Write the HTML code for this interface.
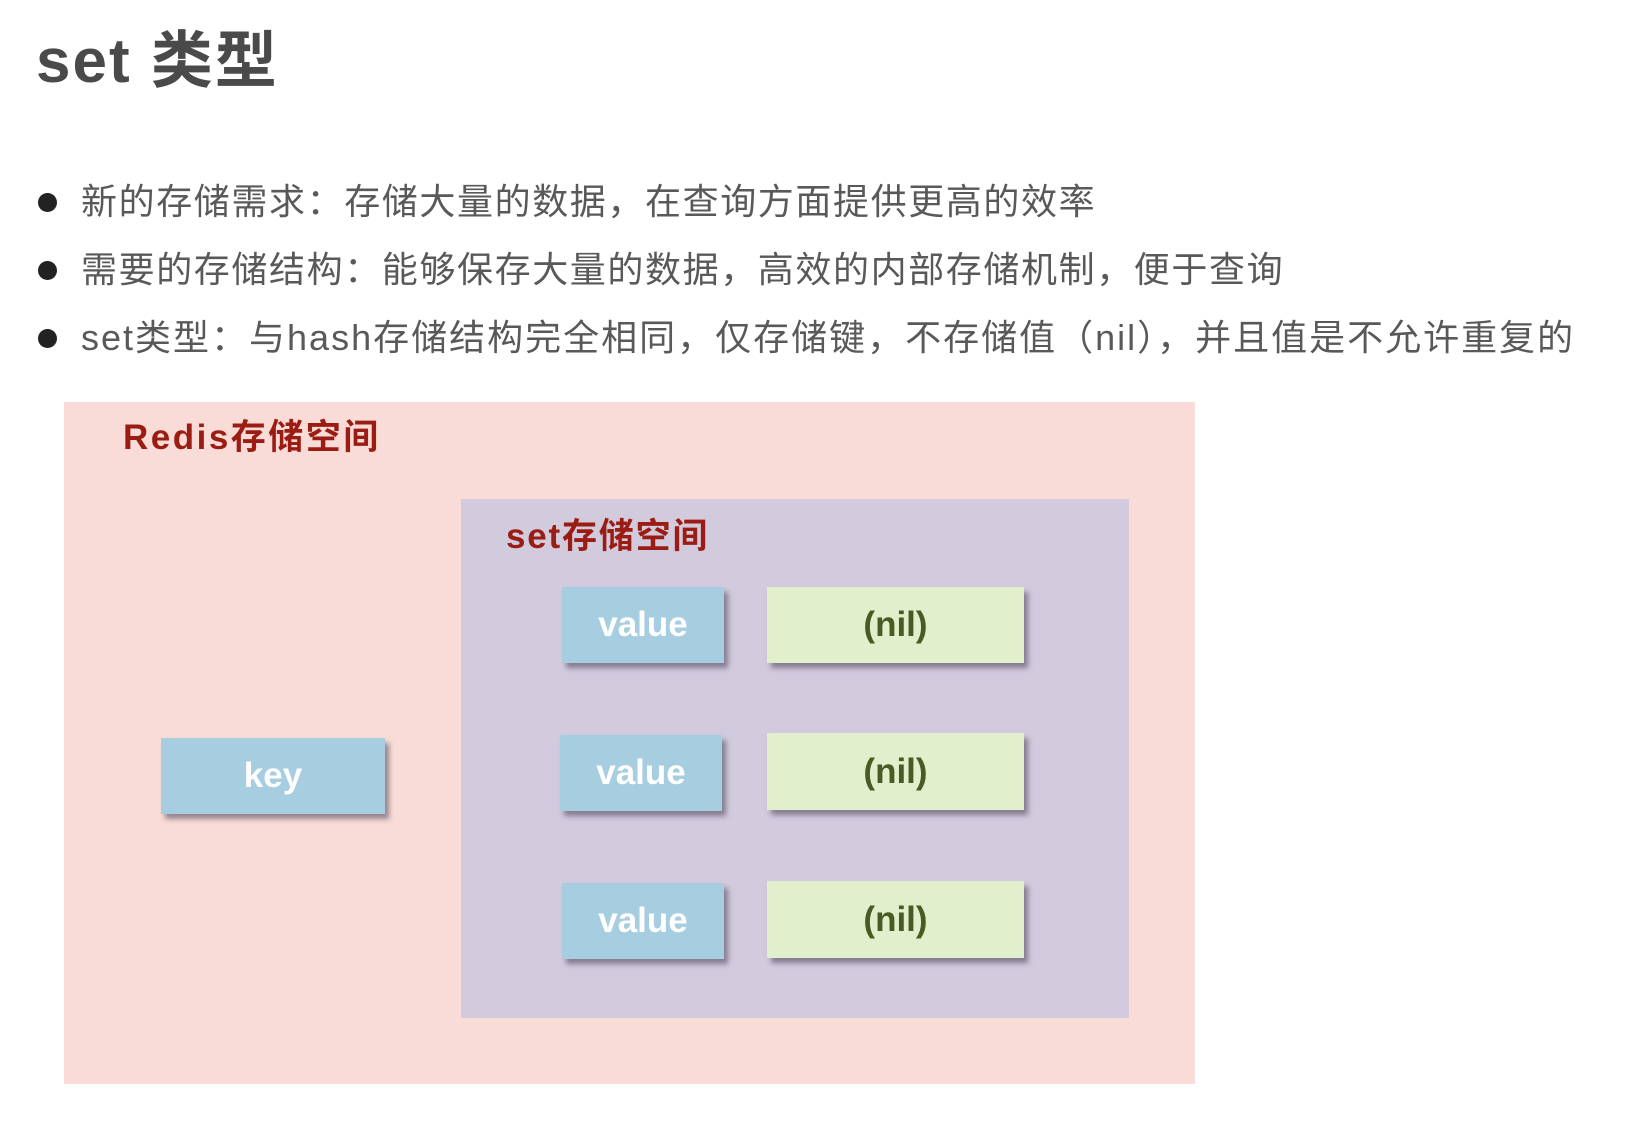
<!DOCTYPE html>
<html><head><meta charset="utf-8"><style>
html,body{margin:0;padding:0;background:#fff;width:1644px;height:1142px;overflow:hidden;position:relative;font-family:"Liberation Sans","Noto Sans CJK SC",sans-serif;}
.a{position:absolute;white-space:nowrap;}
h1{position:absolute;left:36px;top:22px;margin:0;font-size:62px;line-height:80px;font-weight:bold;color:#4a4a4a;letter-spacing:2px;font-family:"Liberation Sans","Noto Sans CJK SC",sans-serif;}
.li{position:absolute;left:81px;font-size:36px;line-height:44px;color:#595959;white-space:nowrap;letter-spacing:1.6px;}
.dot{position:absolute;left:38px;width:19px;height:19px;border-radius:50%;background:#222;}
.box{position:absolute;display:flex;align-items:center;justify-content:center;font-weight:bold;font-size:35px;box-shadow:4px 5px 5px rgba(70,60,80,.55);}
.v{background:#a6cde0;color:#fff;}
.n{background:#e1efcd;color:#4b5a23;}
.lbl{position:absolute;font-weight:bold;font-size:35px;line-height:40px;color:#9b1c12;white-space:nowrap;}
</style></head><body>
<h1>set 类型</h1>
<div class="dot" style="top:193px"></div>
<div class="li" style="top:180px">新的存储需求：存储大量的数据，在查询方面提供更高的效率</div>
<div class="dot" style="top:261px"></div>
<div class="li" style="top:248px">需要的存储结构：能够保存大量的数据，高效的内部存储机制，便于查询</div>
<div class="dot" style="top:329px"></div>
<div class="li" style="top:316px;letter-spacing:2px">set类型：与hash存储结构完全相同，仅存储键，不存储值（nil），并且值是不允许重复的</div>

<div class="a" style="left:64px;top:402px;width:1131px;height:682px;background:#f9dcd8;"></div>
<div class="lbl" style="left:123px;top:418px;letter-spacing:2.5px">Redis存储空间</div>
<div class="a" style="left:461px;top:499px;width:668px;height:519px;background:#d2cadd;"></div>
<div class="lbl" style="left:506px;top:517px;letter-spacing:1.8px">set存储空间</div>

<div class="box v" style="left:161px;top:738px;width:224px;height:76px">key</div>

<div class="box v" style="left:562px;top:587px;width:162px;height:76px">value</div>
<div class="box n" style="left:767px;top:587px;width:257px;height:76px">(nil)</div>
<div class="box v" style="left:560px;top:735px;width:162px;height:76px">value</div>
<div class="box n" style="left:767px;top:733px;width:257px;height:77px">(nil)</div>
<div class="box v" style="left:562px;top:883px;width:162px;height:76px">value</div>
<div class="box n" style="left:767px;top:881px;width:257px;height:77px">(nil)</div>
</body></html>
